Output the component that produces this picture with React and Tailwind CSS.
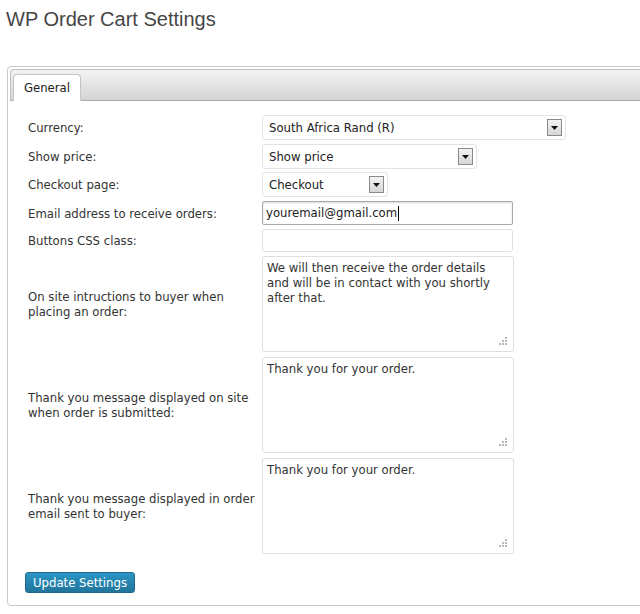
import React from "react";

const font = { fontFamily: '"DejaVu Sans Condensed", "DejaVu Sans", Verdana, sans-serif' };

function SelectBox({ value, width }) {
  return (
    <div
      className="flex h-[25px] items-center justify-between rounded-[3px] border border-[#e3e3e3] bg-white pl-[6px] pr-[3px] text-[13px] text-[#222]"
      style={{ width }}
    >
      <span>{value}</span>
      <span className="flex h-[17px] w-[15px] items-center justify-center border border-[#8a8a8a] bg-gradient-to-b from-[#f4f4f4] to-[#d6d6d6]">
        <svg width="7" height="4" viewBox="0 0 7 4">
          <path d="M0 0h7L3.5 4z" fill="#111" />
        </svg>
      </span>
    </div>
  );
}

function Grip() {
  return (
    <svg
      className="absolute bottom-[5px] right-[5px]"
      width="9"
      height="9"
      viewBox="0 0 9 9"
    >
      <g fill="#b9b9b9">
        <rect x="6" y="0" width="2" height="2" />
        <rect x="3" y="3" width="2" height="2" />
        <rect x="6" y="3" width="2" height="2" />
        <rect x="0" y="6" width="2" height="2" />
        <rect x="3" y="6" width="2" height="2" />
        <rect x="6" y="6" width="2" height="2" />
      </g>
    </svg>
  );
}

function TextBox({ children }) {
  return (
    <div className="relative h-[96px] w-[252px] rounded-[3px] border border-[#dfdfdf] bg-white px-[4px] py-[3px] text-[13px] leading-[15px] text-[#333]">
      {children}
      <Grip />
    </div>
  );
}

function Row({ label, children, className = "" }) {
  return (
    <div className={"flex items-center " + className}>
      <div className="w-[234px] shrink-0 whitespace-nowrap text-[13px] leading-[15px] text-[#333]">
        {label}
      </div>
      {children}
    </div>
  );
}

export default function App() {
  return (
    <div className="min-h-[614px] w-[640px] overflow-hidden bg-white" style={font}>
      <h1
        className="pl-[6px] pt-[7px] text-[20px] leading-[24px] text-[#464646]"
        style={{ fontFamily: '"Liberation Sans", Arial, sans-serif' }}
      >
        WP Order Cart Settings
      </h1>

      <div className="ml-[7px] mt-[35px] h-[540px] w-[660px] rounded-[4px] border border-[#c8c8c8] p-[2px]">
        <div className="flex h-[32px] items-end rounded-t-[4px] border border-b-[#a8a8a8] border-[#c0c0c0] bg-gradient-to-b from-[#f3f3f3] to-[#d4d4d4] pl-[2px]">
          <div className="-mb-px flex h-[27px] w-[68px] items-center justify-center rounded-t-[4px] border border-[#c4c4c4] border-b-white bg-white text-[13px] text-[#222]">
            General
          </div>
        </div>

        <div className="flex flex-col pl-[18px] pt-[14px]">
          <Row label="Currency:">
            <SelectBox value="South Africa Rand (R)" width={304} />
          </Row>
          <Row label="Show price:" className="mt-[4px]">
            <SelectBox value="Show price" width={215} />
          </Row>
          <Row label="Checkout page:" className="mt-[3px]">
            <SelectBox value="Checkout" width={126} />
          </Row>
          <Row label="Email address to receive orders:" className="mt-[4px]">
            <div className="flex h-[24px] w-[251px] items-center rounded-[2px] border border-[#a9a9a9] bg-white px-[3px] text-[13px] text-[#222] shadow-[inset_0_1px_2px_rgba(0,0,0,0.15)]">
              youremail@gmail.com
              <span className="ml-px h-[15px] w-px bg-black" />
            </div>
          </Row>
          <Row label="Buttons CSS class:" className="mt-[4px]">
            <div className="h-[23px] w-[251px] rounded-[3px] border border-[#dfdfdf] bg-white" />
          </Row>
          <Row
            label={
              <>
                On site intructions to buyer when
                <br />
                placing an order:
              </>
            }
            className="mt-[4px]"
          >
            <TextBox>
              We will then receive the order details
              <br />
              and will be in contact with you shortly
              <br />
              after that.
            </TextBox>
          </Row>
          <Row
            label={
              <>
                Thank you message displayed on site
                <br />
                when order is submitted:
              </>
            }
            className="mt-[5px]"
          >
            <TextBox>Thank you for your order.</TextBox>
          </Row>
          <Row
            label={
              <>
                Thank you message displayed in order
                <br />
                email sent to buyer:
              </>
            }
            className="mt-[5px]"
          >
            <TextBox>Thank you for your order.</TextBox>
          </Row>

          <div className="mt-[16px]">
            <button className="-ml-[3px] h-[21px] w-[110px] rounded-[3px] border border-[#1e6a8d] bg-gradient-to-b from-[#2a95c5] to-[#21759b] text-[13px] leading-[19px] text-white">
              Update Settings
            </button>
          </div>
        </div>
      </div>
    </div>
  );
}
